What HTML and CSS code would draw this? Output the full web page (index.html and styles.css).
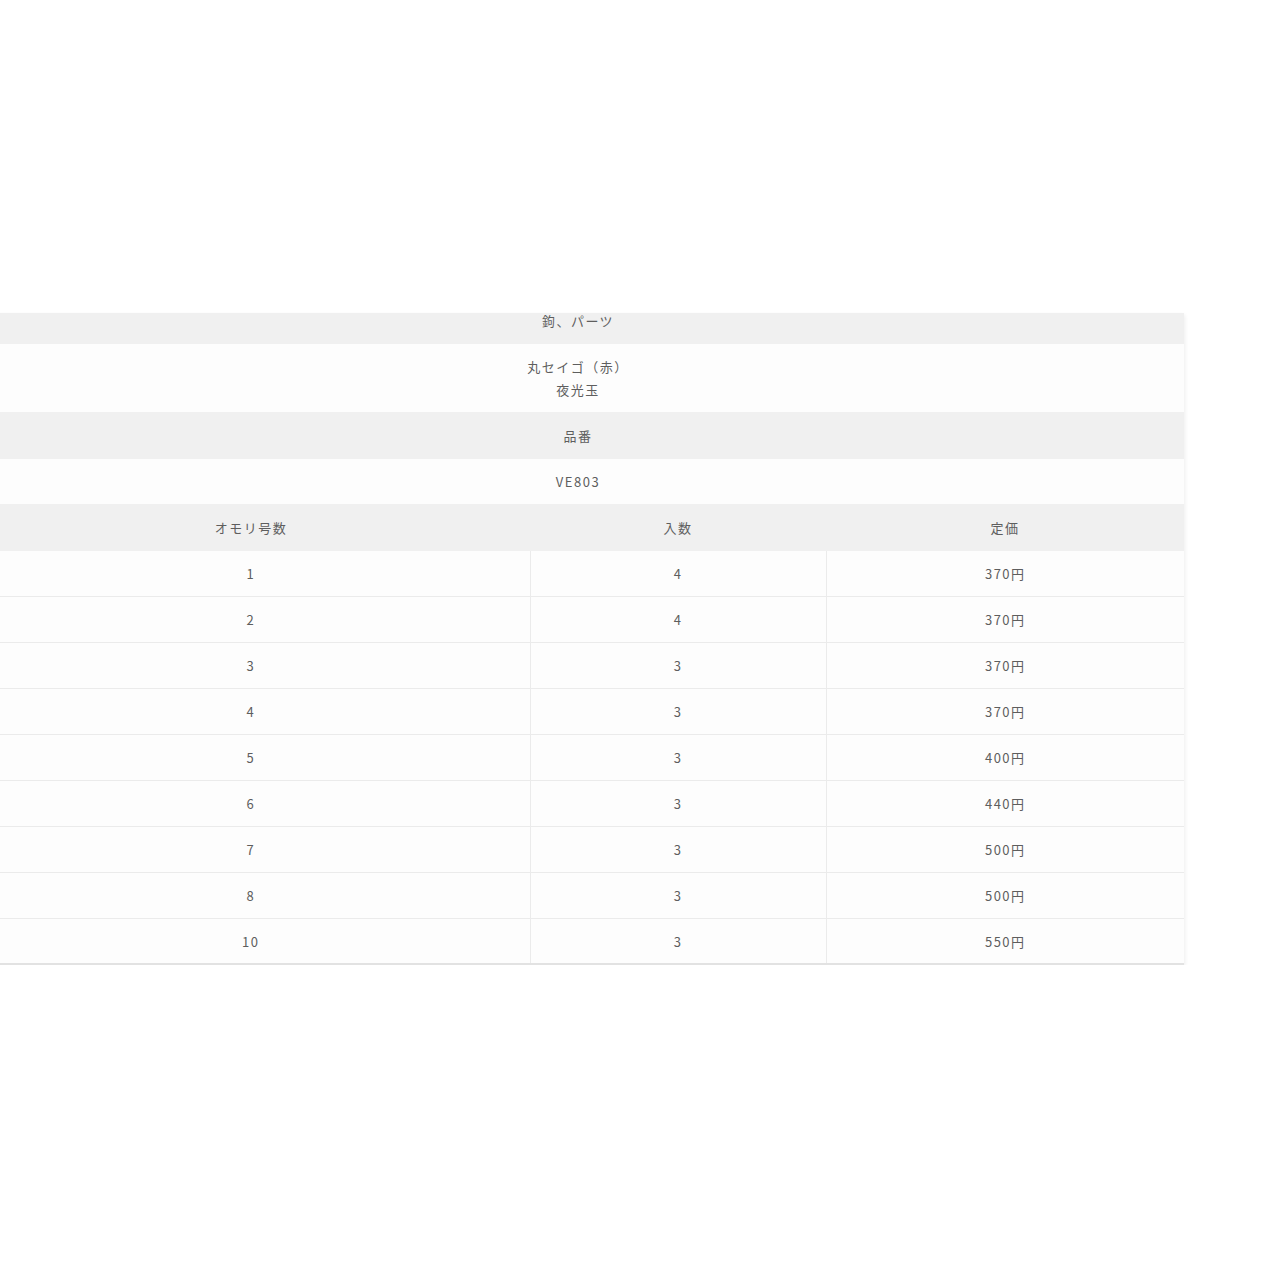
FILE: index.html
```html
<!DOCTYPE html>
<html lang="ja">
<head>
<meta charset="utf-8">
<link rel="stylesheet" href="styles.css">
</head>
<body>
<div class="page">
  <table class="spec">
    <colgroup>
      <col class="c1"><col class="c2"><col class="c3">
    </colgroup>
    <tbody>
      <tr class="gray r-top"><td colspan="3">鉤、パーツ</td></tr>
      <tr class="white r-parts"><td colspan="3">丸セイゴ（赤）<br>夜光玉</td></tr>
      <tr class="gray r-mid"><td colspan="3">品番</td></tr>
      <tr class="white r-code"><td colspan="3">VE803</td></tr>
      <tr class="gray r-head"><td>オモリ号数</td><td>入数</td><td>定価</td></tr>
      <tr class="data"><td>1</td><td>4</td><td>370円</td></tr>
      <tr class="data"><td>2</td><td>4</td><td>370円</td></tr>
      <tr class="data"><td>3</td><td>3</td><td>370円</td></tr>
      <tr class="data"><td>4</td><td>3</td><td>370円</td></tr>
      <tr class="data"><td>5</td><td>3</td><td>400円</td></tr>
      <tr class="data"><td>6</td><td>3</td><td>440円</td></tr>
      <tr class="data"><td>7</td><td>3</td><td>500円</td></tr>
      <tr class="data"><td>8</td><td>3</td><td>500円</td></tr>
      <tr class="data last"><td>10</td><td>3</td><td>550円</td></tr>
    </tbody>
  </table>
</div>
</body>
</html>
```

FILE: styles.css
```css
html, body {
  margin: 0;
  padding: 0;
  background: #ffffff;
}
.page {
  padding-top: 313px;
  margin-left: -28px;
  width: 1212px;
}
.spec {
  width: 1212px;
  border-collapse: collapse;
  table-layout: fixed;
  font-family: "Noto Sans CJK JP", "Noto Sans", sans-serif;
  font-size: 13px;
  letter-spacing: 1.5px;
  color: #5e5e5e;
  box-shadow: 1px 2px 4px rgba(0, 0, 0, 0.07);
}
.c1 { width: 558px; }
.c2 { width: 296px; }
.c3 { width: 358px; }
.spec td {
  text-align: center;
  padding: 0;
  vertical-align: middle;
}
.gray td { background: #f0f0f0; }
.white td { background: #fdfdfd; }
.r-top td {
  height: 31px;
  vertical-align: top;
  line-height: 16px;
}
.r-parts td {
  height: 68px;
  line-height: 23px;
}
.r-mid td { height: 47px; }
.r-code td { height: 45px; }
.r-head td { height: 47px; }
.data td {
  height: 45px;
  background: #fdfdfd;
  border-bottom: 1px solid #ebebeb;
}
.data td + td {
  border-left: 1px solid #ebebeb;
}
.data.last td {
  height: 44px;
  border-bottom: 2px solid #e2e2e2;
}
```
